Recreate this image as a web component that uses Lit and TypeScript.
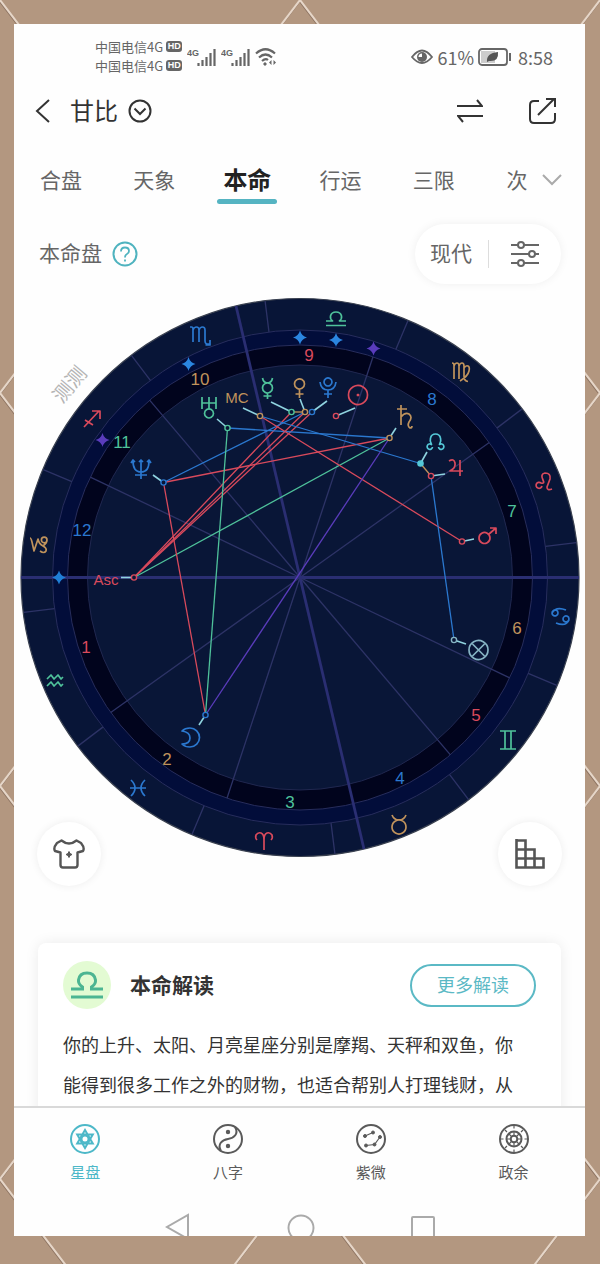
import { LitElement, html, svg, css } from "lit";
import { customElement, state } from "lit/decorators.js";

const RED = "#d94a5c";
const GREEN = "#4fc29b";
const BLUE = "#2b78cf";
const ORANGE = "#c0935c";
const PURPLE = "#5a3cbc";
const CYAN = "#55c8d8";

const CX = 300;
const CY = 577.5;

const polar = (deg: number, r: number) => {
  const a = (deg * Math.PI) / 180;
  return [CX - r * Math.cos(a), CY - r * Math.sin(a)];
};

const spoke = (deg: number, from: number, to: number) => {
  const [x1, y1] = polar(deg, from);
  const [x2, y2] = polar(deg, to);
  return svg`<line x1=${x1} y1=${y1} x2=${x2} y2=${y2} />`;
};

const SIGN_EDGES = Array.from({ length: 12 }, (_, i) => 22.8 + i * 30);
const HOUSE_EDGES = [25.6, 49.7, 108.3, 144.5, 205.6, 229.7, 288.3, 324.5];

type Glyph = { x: number; y: number; c: string; d: string };

// Each outline is drawn around its own centre.
const GLYPHS: Glyph[] = [
  { x: 200, y: 336, c: BLUE, d: "M-10 -9H-8.500Q-7 -9 -7 -7V6M-7 -6Q-6 -9 -3.500 -9Q-1 -9 -1 -6V6M-1 -6Q0 -9 2.500 -9Q5 -9 5 -6V5Q5 9 10 8M10 4V9H5.500" },
  { x: 336, y: 319, c: GREEN, d: "M-10 2H-3.500Q-6 0 -5.500 -3Q-4.500 -7 0 -7Q4.500 -7 5.500 -3Q6 0 3.500 2H10M-10 6.500H10" },
  { x: 461, y: 372, c: ORANGE, d: "M-9 -9Q-7 -9 -7 -7V7M-7 -6Q-6 -9 -4 -9Q-2 -9 -2 -6V7M-2 -6Q-1 -9 1 -9Q3 -9 3 -6V4Q3 9 7 9.500M3 -4Q5 -7 7 -6Q9 -5 8 -1Q7 4 -1 9" },
  { x: 544, y: 482, c: RED, d: "M-2 4A3 3 0 1 1 -3 1Q1 2 -1 -2Q-4 -8 1 -9Q7 -9 6 -3L3 5Q3 9 8 7" },
  { x: 561, y: 616, c: BLUE, d: "M-3 -3A3 3 0 1 1 -3 -3.100M-9 -3Q-5 -10 5 -6M8 3A3 3 0 1 1 8 2.900M8 4Q5 11 -5 7" },
  { x: 508, y: 740, c: GREEN, d: "M-8 -9H8M-8 9H8M-3 -9V9M3 -9V9" },
  { x: 399, y: 824, c: ORANGE, d: "M-7 -9Q-5 -4 0 -4Q5 -4 7 -9M7 3A7 7 0 1 1 7 2.900" },
  { x: 264, y: 841, c: RED, d: "M-7 -1Q-9 -3 -8 -6Q-6 -9 -3 -8Q0 -7 0 -1V9M0 -1Q0 -7 3 -8Q6 -9 8 -6Q9 -3 7 -1" },
  { x: 138, y: 788, c: BLUE, d: "M-7 -8Q1 0 -7 8M7 -8Q-1 0 7 8M-8 0H8" },
  { x: 55, y: 681, c: GREEN, d: "M-8 -2L-4 -6L-1 -2L3 -6L6 -2L8 -4M-8 5L-4 1L-1 5L3 1L6 5L8 3" },
  { x: 39, y: 545, c: ORANGE, d: "M-9 -7Q-8 -7 -7 -3L-5 6L-1 -6Q0 -1 4 1Q8 3 7 6Q5 9 1 6M8 -5A2.800 2.800 0 1 1 2.400 -5A2.800 2.800 0 1 1 8 -5Q8 -2 4 1" },
  { x: 92, y: 419, c: RED, d: "M-8 8L7 -8M0 -8H8V0M-7 1L1 6" },
  { x: 209, y: 407, c: GREEN, d: "M-7 -10V2M7 -10V2M-7 -4H7M0 -10V2M4.500 6.500A4.500 4.500 0 1 1 4.500 6.400" },
  { x: 267.5, y: 388, c: GREEN, d: "M-5 -10Q-4 -5 0 -5Q4 -5 5 -10M5 0A5 5 0 1 1 5 -.1M0 5V11M-4 8H4" },
  { x: 299.5, y: 388, c: ORANGE, d: "M5 -4A5 5 0 1 1 5 -4.100M0 1V10M-4 6H4" },
  { x: 328, y: 387, c: BLUE, d: "M4 -5A4 4 0 1 1 4 -5.100M-8 -5Q-7 3 0 3Q7 3 8 -5M0 3V11M-4 7H4" },
  { x: 358, y: 395, c: RED, d: "M9.500 0A9.500 9.500 0 1 1 9.500 -.1M-.5 -.5H.5V.5H-.5Z" },
  { x: 404, y: 417, c: ORANGE, d: "M-7 -8H3M-3 -12V8M-3 0Q1 -5 5 -3Q9 0 5 5Q3 9 6 11Q8 11 8 9" },
  { x: 435.500, y: 442, c: CYAN, d: "M-3 5A2.700 2.700 0 1 1 -4 2.500Q-6 -1 -5 -4Q-4 -8 0 -8Q4 -8 5 -4Q6 -1 4 2.500A2.700 2.700 0 1 1 3 5" },
  { x: 456, y: 467, c: RED, d: "M-7 -6Q-2 -9 -1 -4Q0 1 -6 4H7M4 -7V9" },
  { x: 488, y: 536, c: RED, d: "M2 2A5.500 5.500 0 1 1 2 1.900M1 -2L8 -8M2 -8H8V-2" },
  { x: 478.500, y: 650, c: "#86b4c4", d: "M9.500 0A9.500 9.500 0 1 1 9.500 -.1M-6 -6L6 6M6 -6L-6 6" },
  { x: 141, y: 470, c: BLUE, d: "M-8 -9Q-8 2 0 2Q8 2 8 -9M0 -9V9M-6 5H6M-10 -7L-8 -10L-6 -8M-2 -8L0 -10L2 -8M6 -8L8 -10L10 -7" },
  { x: 190, y: 738, c: BLUE, d: "M-8 -7Q-5 -10 0 -10A9 9 0 0 1 0 9Q-5 9 -8 6Q0 6 0 0Q0 -6 -8 -7Z" },
];

const ASPECTS: [number, number, number, number, string][] = [
  [134, 577.5, 291.5, 412, RED],
  [134, 577.5, 305, 412, RED],
  [134, 577.5, 312, 412, RED],
  [134, 577.5, 389.5, 438, GREEN],
  [163.5, 482.5, 389.5, 438, RED],
  [163.5, 482.5, 305, 412, BLUE],
  [163.5, 482.5, 205.5, 715, RED],
  [227.5, 428, 205.5, 715, GREEN],
  [227.5, 428, 389.5, 438, BLUE],
  [260, 416, 462, 541.5, RED],
  [260, 416, 420.5, 463.5, BLUE],
  [389.5, 438, 205.5, 715, PURPLE],
  [420.5, 463.5, 431, 476, ORANGE],
  [431, 476, 454, 640, BLUE],
  [291.5, 412, 305, 412, ORANGE],
];

// Marker position, then the far end of the pointer that leads to its symbol.
const POINTS: [number, number, number, number, string][] = [
  [260, 416, 243, 408, ORANGE],
  [291.5, 412, 271, 402, GREEN],
  [312, 412, 327, 401, BLUE],
  [305, 412, 300, 399, ORANGE],
  [336, 416, 355, 408, RED],
  [389.5, 438, 396, 428, ORANGE],
  [227.5, 428, 217, 419, GREEN],
  [420.5, 463.5, 427, 452, CYAN],
  [431, 476, 445, 474, RED],
  [462, 541.5, 474, 539, RED],
  [454, 640, 466, 644, "#86b4c4"],
  [163.5, 482.5, 153, 475, BLUE],
  [134, 577.5, 121, 577.5, RED],
  [205.5, 715, 199, 725, BLUE],
];

const HOUSES: [number, number, string, string][] = [
  [86, 647, "1", RED],
  [167, 759, "2", ORANGE],
  [290, 802, "3", GREEN],
  [400, 778, "4", BLUE],
  [476, 715, "5", RED],
  [517, 628, "6", ORANGE],
  [512, 511, "7", GREEN],
  [432, 399, "8", BLUE],
  [309, 355, "9", RED],
  [200, 379, "10", ORANGE],
  [122, 442, "11", GREEN],
  [82, 530, "12", BLUE],
];

const STARS: [number, number, string][] = [
  [300, 337.5, "#2b86e0"],
  [336, 340, "#2b86e0"],
  [373.5, 348.5, PURPLE],
  [188.5, 364, "#2b86e0"],
  [102.5, 440, PURPLE],
  [59, 577.5, "#1f7fd6"],
];

@customElement("natal-wheel")
class NatalWheel extends LitElement {
  static styles = css`
    :host { display: block; }
    .wheel { display: block; width: 100%; height: auto; }
    .house { font: 17px "Liberation Sans", Arial, sans-serif; text-anchor: middle; }
    .angle { font: 15px "Liberation Sans Narrow", "Liberation Sans", sans-serif; text-anchor: middle; }
    .mark { font: 20px "Noto Sans CJK SC", sans-serif; fill: #b4b4b4; text-anchor: middle; }
  `;

  render() {
    return html`<svg class="wheel" viewBox="14 290 571 606" role="img" aria-label="本命盘">
      <circle cx=${CX} cy=${CY} r="279" fill="#081537" stroke="#3a4150" stroke-width="1.2" />
      <circle cx=${CX} cy=${CY} r="247.5" fill="#020d3a" stroke="#272d5c" />
      <circle cx=${CX} cy=${CY} r="232.5" fill="#01041d" stroke="#272d5c" />
      <circle cx=${CX} cy=${CY} r="212.5" fill="#091637" stroke="#20274f" />
      <g stroke="#2d3366" stroke-width="1.3">
        ${SIGN_EDGES.map((a) => spoke(a, 247.5, 278.5))}
        ${HOUSE_EDGES.map((a) => spoke(a, 0, 232.5))}
      </g>
      <g stroke="#2a2e72" stroke-width="2.8">
        <line x1="21" y1=${CY} x2="579" y2=${CY} />
        <line x1="236" y1="306" x2="364" y2="849" />
      </g>
      <g stroke-width="1.3">
        ${ASPECTS.map(([a, b, c, d, s]) => svg`<line x1=${a} y1=${b} x2=${c} y2=${d} stroke=${s} />`)}
      </g>
      ${POINTS.map(
        ([x, y, tx, ty, c]) => svg`
          <line x1=${x} y1=${y} x2=${tx} y2=${ty} stroke="#8fd3df" stroke-width="1.6" />
          <circle cx=${x} cy=${y} r="2.6" fill=${c === CYAN ? CYAN : "#091637"} stroke=${c} stroke-width="1.4" />`
      )}
      ${STARS.map(
        ([x, y, c]) => svg`<path transform="translate(${x} ${y})" fill=${c}
          d="M0 -7Q1.500 -1.500 7 0Q1.500 1.500 0 7Q-1.500 1.500 -7 0Q-1.500 -1.500 0 -7Z" />`
      )}
      <g fill="none" stroke-width="1.7" stroke-linejoin="round">
        ${GLYPHS.map((g) => svg`<path transform="translate(${g.x} ${g.y})" stroke=${g.c} d=${g.d} />`)}
      </g>
      ${HOUSES.map(([x, y, n, c]) => svg`<text class="house" x=${x} y=${y + 6} fill=${c}>${n}</text>`)}
      <text class="angle" x="237" y="403" fill=${ORANGE}>MC</text>
      <text class="angle" x="106" y="585" fill=${RED}>Asc</text>
      <text class="mark" transform="translate(75 389) rotate(-50)">测测</text>
    </svg>`;
  }
}

const signal = html`<svg width="29" height="20" viewBox="0 0 29 20" aria-hidden="true">
  <text x="0" y="9" class="tiny">4G</text>
  <path d="M11.500 19v-3M15.500 19v-6M19.500 19v-9M23.500 19V6M27.500 19V2" stroke="#666" stroke-width="2.200" />
</svg>`;

const NAV = [
  {
    label: "星盘",
    icon: svg`<circle cx="16" cy="16" r="14" /><path d="M16 7l7.800 13.500H8.200ZM16 25L8.200 11.500h15.600Z" /><circle cx="16" cy="16" r="3.500" />`,
  },
  {
    label: "八字",
    icon: svg`<circle cx="16" cy="16" r="14" /><path d="M23 4C27 11 22 15 16 16S5 21 9 28" /><circle cx="16" cy="9" r="1.200" fill="currentColor" /><circle cx="16" cy="23" r="1.200" fill="currentColor" />`,
  },
  {
    label: "紫微",
    icon: svg`<circle cx="16" cy="16" r="14" /><path d="M10 13l8 -3.500M11 22.500l8.500 -1L25 14" stroke-width="1.200" /><g fill="currentColor" stroke-width="1"><circle cx="10" cy="13" r="1.500" /><circle cx="18" cy="9.500" r="1.500" /><circle cx="25" cy="14" r="1.500" /><circle cx="19.500" cy="21.500" r="1.500" /><circle cx="11" cy="22.500" r="1.500" /></g>`,
  },
  {
    label: "政余",
    icon: svg`<circle cx="16" cy="16" r="14" /><circle cx="16" cy="16" r="7.500" /><circle cx="16" cy="16" r="3.300" /><path d="M16 3v2.500M16 26.500v2.500M3 16h2.500M26.500 16h2.500M7 7l2 2M23 23l2 2M25 7l-2 2M9 23l-2 2M11 11l2.500 2.500M18.500 18.500L21 21M21 11l-2.500 2.500M13.500 18.500L11 21M16 9v3M16 20v3M9 16h3M20 16h3" stroke-width="1.200" />`,
  },
];

@customElement("app-root")
class AppRoot extends LitElement {
  @state() private tab = "本命";
  @state() private section = "星盘";

  static styles = css`
    :host {
      display: block;
      box-sizing: border-box;
      height: 100vh;
      padding: 24px 15px 28px 14px;
      position: relative;
      background: #b39780;
      font-family: "Noto Sans CJK SC", sans-serif;
      color: #333;
    }
    * { box-sizing: border-box; }
    svg { display: block; flex: none; }
    button { font: inherit; color: inherit; background: none; border: 0; padding: 0; cursor: pointer; }
    .backdrop { position: absolute; inset: 0; width: 100%; height: 100%; }
    .phone { position: relative; height: 100%; background: #fefefe; display: flex; flex-direction: column; overflow: hidden; }
    .line { fill: none; stroke: currentColor; stroke-width: 2; }

    .status { display: flex; align-items: center; height: 66px; padding: 0 32px 0 81px; color: #666; flex: none; }
    .carriers { font-size: 13px; line-height: 19px; margin-right: 5px; padding-bottom: 2px; }
    .carrier { display: flex; align-items: center; gap: 3px; }
    .hd { font: bold 9px/11px "Liberation Sans", sans-serif; background: #666; color: #fff; border-radius: 3px; padding: 0 1px; width: 16px; text-align: center; }
    .signals { display: flex; gap: 5px; align-items: center; }
    .tiny { font: bold 9px "Liberation Sans Narrow", "Liberation Sans", sans-serif; fill: #666; }
    .power { margin-left: auto; display: flex; align-items: center; font-size: 18px; gap: 4px; }
    .clock { margin-left: 2px; }

    .header { display: flex; align-items: center; height: 42px; padding: 0 28px 0 20px; flex: none; }
    .back { margin-right: 18px; }
    .name { font-size: 24px; font-weight: 400; line-height: 24px; margin: 0 10px 0 0; padding-bottom: 2px; }
    .actions { margin-left: auto; display: flex; gap: 45px; align-items: center; }

    .tabs { display: flex; align-items: center; padding: 28px 23px 0 17px; flex: none; }
    .tablist { flex: 1; display: flex; justify-content: space-between; }
    .tab { width: 60px; height: 42px; padding-bottom: 4px; font-size: 21px; line-height: 38px; color: #666; position: relative; white-space: nowrap; }
    .tab.cut { width: 40px; }
    .tab.on { font-size: 24px; font-weight: 700; color: #222; }
    .tab.on::after { content: ""; position: absolute; left: 0; right: 0; bottom: -2px; height: 5px; border-radius: 3px; background: #55b4c2; }
    .more { color: #aaa; margin-left: 5px; }

    .bar { display: flex; align-items: center; margin: 22px 24px 6px 25px; height: 60px; flex: none; font-size: 21px; color: #666; }
    .chartname { line-height: 28px; padding-bottom: 4px; }
    .help { margin-left: 10px; color: #4fb3bf; }
    .pill { margin-left: auto; display: flex; align-items: center; height: 60px; padding: 0 21px 0 15px; border-radius: 30px; background: #fff; box-shadow: 0 0 10px #00000010; }
    .mode { padding: 0 16px 4px 0; border-right: 1px solid #ddd; line-height: 24px; margin-right: 21px; }

    .content { flex: 1; min-height: 0; overflow: hidden; }
    .stage { display: grid; margin-bottom: 47px; }
    .stage > * { grid-area: 1 / 1; }
    .tools { align-self: end; display: flex; justify-content: space-between; padding: 0 23px 10px; position: relative; }
    .tool { width: 64px; height: 64px; border-radius: 50%; background: #fff; box-shadow: 0 0 9px #00000012; display: grid; place-items: center; color: #555; }

    .card { margin: 0 24px; padding: 18px 25px 24px; border-radius: 8px; background: #fff; box-shadow: 0 0 14px #00000014; }
    .cardhead { display: flex; align-items: center; height: 48px; margin-bottom: 15px; }
    .badge { width: 48px; height: 48px; border-radius: 50%; background: #e3fbd3; display: grid; place-items: center; color: #4cb592; }
    .title { margin: 0 0 0 19px; font-size: 21px; font-weight: 700; line-height: 21px; padding-bottom: 2px; color: #333; }
    .read { margin-left: auto; width: 126px; height: 43px; padding-bottom: 2px; border: 2px solid #5bb9c5; border-radius: 22px; color: #5bb9c5; font-size: 18px; }
    .copy { margin: 0; padding-right: 16px; font-size: 18px; line-height: 40px; color: #333; }

    .nav { display: grid; grid-template-columns: repeat(4, 1fr); border-top: 2px solid #d9d9d9; padding-top: 15px; flex: none; background: #fefefe; }
    .item { display: flex; flex-direction: column; align-items: center; gap: 6px; font-size: 15px; line-height: 22px; padding-bottom: 2px; color: #5a5a5a; }
    .item.on { color: #4db8c8; }
    .system { display: flex; justify-content: center; gap: 96px; height: 24px; margin-top: 27px; overflow: hidden; flex: none; color: #aaa; }
  `;

  private renderTab(name: string, cut = false) {
    return html`<button
      class="tab ${this.tab === name ? "on" : ""} ${cut ? "cut" : ""}"
      role="tab"
      aria-selected=${this.tab === name}
      @click=${() => (this.tab = name)}
    >${name}</button>`;
  }

  render() {
    const carrier = html`<div class="carrier"><span>中国电信4G</span><span class="hd">HD</span></div>`;
    return html`
      <svg class="backdrop" aria-hidden="true">
        <defs>
          <pattern id="lattice" width="300" height="393" patternUnits="userSpaceOnUse">
            <path d="M-2 -1L301 396M-1 395L302 -2" stroke="#8f7563" stroke-width="2" fill="none" />
            <path d="M0 0L300 393M0 393L300 0" stroke="#e6d6c8" stroke-width="2" fill="none" />
          </pattern>
        </defs>
        <rect width="100%" height="100%" fill="url(#lattice)" />
      </svg>
      <main class="phone">
        <div class="status">
          <div class="carriers">${carrier}${carrier}</div>
          <div class="signals">
            ${signal}${signal}
            <svg width="22" height="20" viewBox="0 0 22 20" fill="none" stroke="#666" stroke-width="2.200" aria-hidden="true">
              <path d="M1 6.500Q10.500 -2 20 6.500M4 10.500Q10.500 4.500 17 10.500M7 14Q10.500 11 13 13" />
              <circle cx="10" cy="17" r="1.200" fill="#666" stroke-width="1" />
              <path d="M16.500 13l-2.500 2.500l2.500 2.500ZM18.500 13l2.500 2.500l-2.500 2.500Z" fill="#666" stroke="none" />
            </svg>
          </div>
          <div class="power">
            <svg width="22" height="16" viewBox="0 0 22 16" aria-hidden="true">
              <path d="M1 8Q11 -5 21 8Q11 20 1 8Z" fill="none" stroke="#666" stroke-width="1.800" />
              <circle cx="11" cy="8" r="5" fill="#666" /><path d="M11 8V4.500A3.500 3.500 0 0 0 7.500 8Z" fill="#fff" />
            </svg>
            <span>61%</span>
            <svg width="34" height="18" viewBox="0 0 34 18" aria-hidden="true">
              <rect x="3" y="3" width="14" height="12" fill="#ccc" />
              <rect x="1" y="1" width="28" height="16" rx="3" fill="none" stroke="#666" stroke-width="1.800" />
              <path d="M32 5v8" stroke="#666" stroke-width="2" />
              <path d="M9 14Q8 5 20 4Q21 14 11 13ZM9 15L16 8" fill="#555" />
            </svg>
            <span class="clock">8:58</span>
          </div>
        </div>

        <header class="header">
          <button class="back" aria-label="返回">
            <svg class="line" width="18" height="26" viewBox="0 0 18 26"><path d="M15 2L3 13L15 24" /></svg>
          </button>
          <h1 class="name">甘比</h1>
          <button aria-label="切换">
            <svg class="line" width="24" height="24" viewBox="0 0 24 24"><circle cx="12" cy="12" r="10.500" /><path d="M6.500 9.500L12 15L17.500 9.500" /></svg>
          </button>
          <div class="actions">
            <button aria-label="交换">
              <svg class="line" width="26" height="24" viewBox="0 0 26 24"><path d="M0 7H25L20 1M26 17H1L6 23" /></svg>
            </button>
            <button aria-label="分享">
              <svg class="line" width="29" height="30" viewBox="0 0 29 30" stroke-width="2"><path d="M11 5H6Q2 5 2 9V23Q2 27 6 27H23Q27 27 27 23V17M10 19L26 3M18 3H27V11" /></svg>
            </button>
          </div>
        </header>

        <nav class="tabs">
          <div class="tablist" role="tablist">
            ${["合盘", "天象", "本命", "行运", "三限"].map((t) => this.renderTab(t))}${this.renderTab("次", true)}
          </div>
          <button class="more" aria-label="更多">
            <svg class="line" width="20" height="20" viewBox="0 0 20 20"><path d="M1 4L10 13L19 4" /></svg>
          </button>
        </nav>

        <div class="bar">
          <span class="chartname">本命盘</span>
          <button class="help" aria-label="帮助">
            <svg class="line" width="26" height="26" viewBox="0 0 26 26"><circle cx="13" cy="13" r="11.500" /><path d="M9 10.500Q9 6.500 13 6.500Q17 6.500 17 10Q17 12 15 13Q13 14 13 16.500M13 18.500V20.500" stroke-width="1.800" /></svg>
          </button>
          <div class="pill">
            <button class="mode">现代</button>
            <button aria-label="设置">
              <svg class="line" width="30" height="28" viewBox="0 0 30 28">
                <path d="M1 5H8M14 5H29M1 14H19M25 14H29M1 23H8M14 23H29" />
                <circle cx="11" cy="5" r="3" /><circle cx="22" cy="14" r="3" /><circle cx="11" cy="23" r="3" />
              </svg>
            </button>
          </div>
        </div>

        <div class="content">
          <section class="stage">
            <natal-wheel></natal-wheel>
            <div class="tools">
              <button class="tool" aria-label="换肤">
                <svg class="line" width="32" height="30" viewBox="0 0 32 30" stroke-linejoin="round">
                  <path d="M8.500 1.500Q16 7.500 23.500 1.500L28 4Q32 9 30 12L24.500 13.500V26Q24.500 28.500 22 28.500H10Q7.500 28.500 7.500 26V13.500L2 12Q0 9 4 4Z" stroke-width="2.400" />
                  <path d="M16 12.500Q16.500 15 19 15.500Q16.500 16 16 18.500Q15.500 16 13 15.500Q15.500 15 16 12.500Z" fill="currentColor" stroke-width="1" />
                </svg>
              </button>
              <button class="tool" aria-label="相位表">
                <svg class="line" width="30" height="30" viewBox="0 0 30 30">
                  <path d="M1.500 1.500H10.500V28.500M1.500 0V28.500H28.500V19.500H1.500M1.500 10.500H19.500V28.500" stroke-width="2.600" />
                </svg>
              </button>
            </div>
          </section>

          <article class="card">
            <div class="cardhead">
              <span class="badge">
                <svg width="32" height="28" viewBox="0 0 32 28" fill="none" stroke="currentColor" stroke-width="3" aria-hidden="true">
                  <path d="M0 18H11.500V16Q7 13 7.500 9Q8.500 2 16 2Q23.500 2 24.500 9Q25 13 20.500 16V18H32M0 26H32" />
                </svg>
              </span>
              <h2 class="title">本命解读</h2>
              <button class="read">更多解读</button>
            </div>
            <p class="copy">你的上升、太阳、月亮星座分别是摩羯、天秤和双鱼，你能得到很多工作之外的财物，也适合帮别人打理钱财，从</p>
          </article>
        </div>

        <nav class="nav">
          ${NAV.map(
            (n) => html`<button class="item ${this.section === n.label ? "on" : ""}" @click=${() => (this.section = n.label)}>
              <svg class="line" width="32" height="32" viewBox="0 0 32 32" aria-hidden="true">${n.icon}</svg>
              <span>${n.label}</span>
            </button>`
          )}
        </nav>
        <div class="system">
          <button aria-label="系统返回"><svg class="line" width="26" height="28" viewBox="0 0 26 28"><path d="M23 3V27L2 15Z" /></svg></button>
          <button aria-label="主屏幕"><svg class="line" width="28" height="28" viewBox="0 0 28 28"><circle cx="14" cy="16" r="12.500" /></svg></button>
          <button aria-label="最近任务"><svg class="line" width="24" height="28" viewBox="0 0 24 28"><rect x="1" y="5" width="22" height="22" rx="1" /></svg></button>
        </div>
      </main>
    `;
  }
}
